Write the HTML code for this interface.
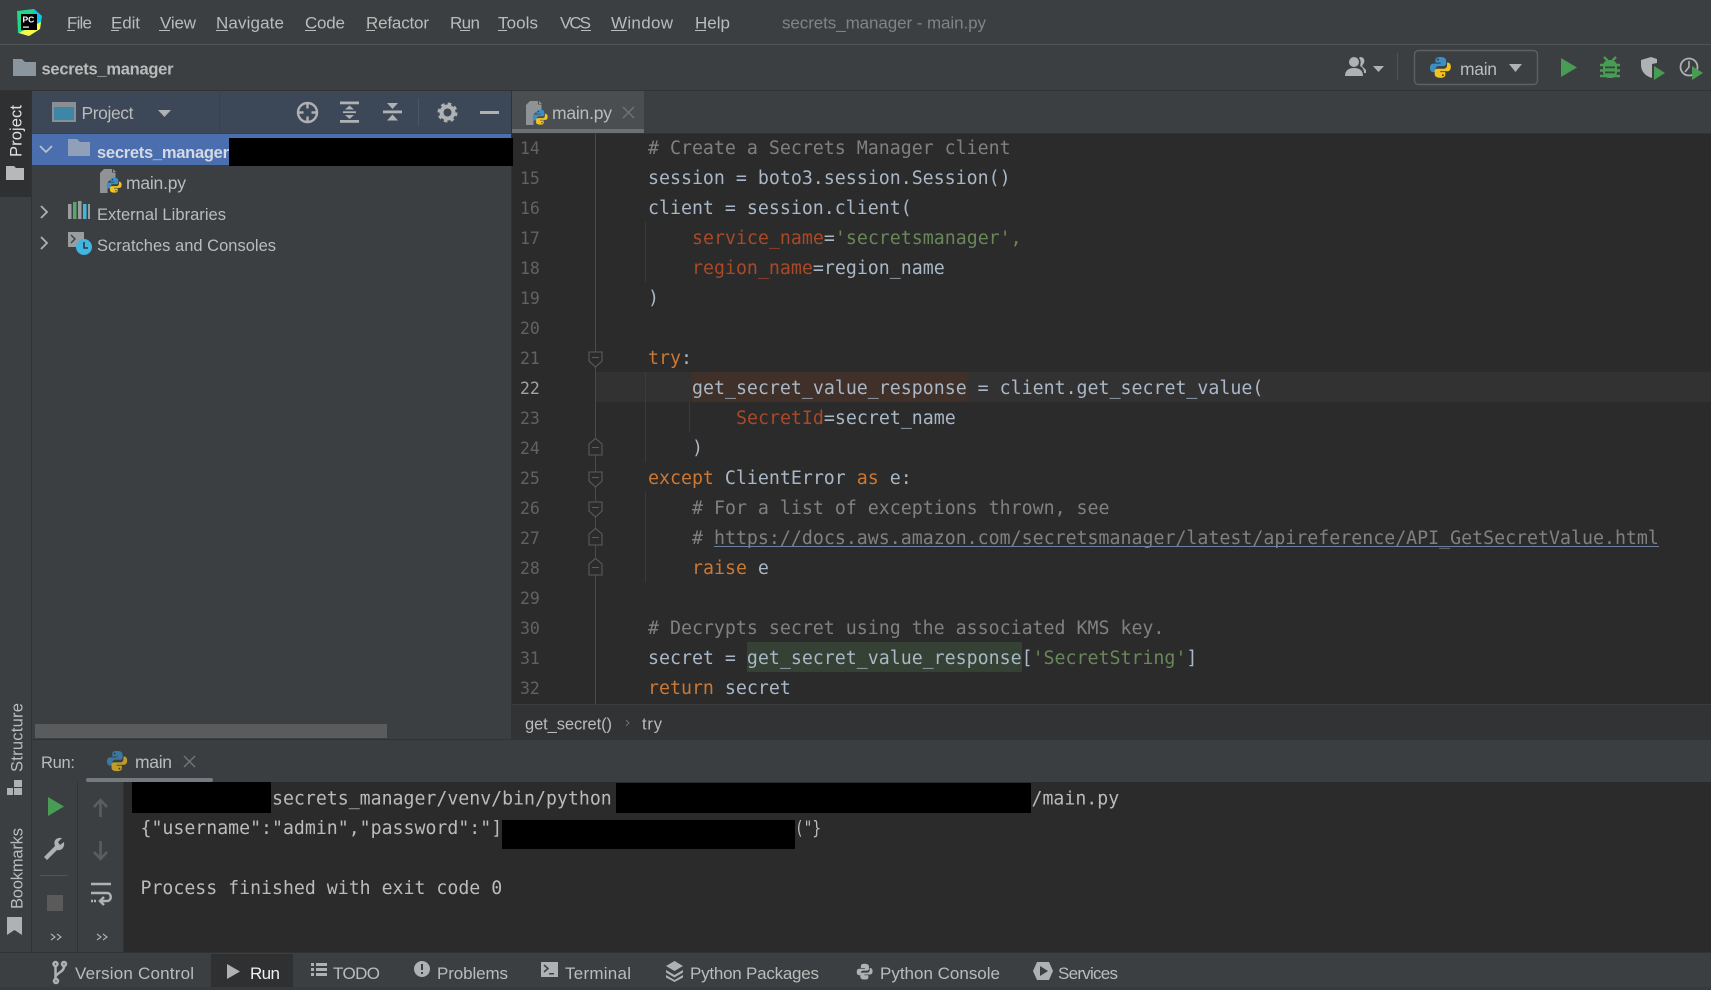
<!DOCTYPE html>
<html><head><meta charset="utf-8"><title>secrets_manager - main.py</title>
<style>
html,body{margin:0;padding:0;background:#3c3f41;width:1711px;height:990px;overflow:hidden}
svg{display:block}
text{font-family:"Liberation Sans",sans-serif;font-size:17px;fill:#bbbbbb;white-space:pre}
.c{font-family:"DejaVu Sans Mono","Liberation Mono",monospace;font-size:18.25px;fill:#a9b7c6}
.n{font-family:"DejaVu Sans Mono","Liberation Mono",monospace;font-size:16.5px;fill:#606366}
.k{fill:#cc7832}.p{fill:#aa4926}.s{fill:#6a8759}.g{fill:#808080}
.o{font-family:"DejaVu Sans Mono","Liberation Mono",monospace;font-size:18.22px;fill:#bbbbbb}
</style></head><body>
<svg width="1711" height="990" viewBox="0 0 1711 990" xmlns="http://www.w3.org/2000/svg">
<defs>
<g id="py">
<path fill="#3d8ec4" d="M12 1C7 1 6.8 3 6.8 4.6V7H12.3V8H4.4C2.3 8 1 9.8 1 12.5S2.3 17 4.4 17H6.8V14.2C6.8 12 8.3 10.6 10.2 10.6H15.4C17 10.6 18 9.5 18 8V4.6C18 2.6 16 1 12 1Z"/>
<circle cx="9.4" cy="3.8" r="1" fill="#26394a"/>
<path fill="#f2c31f" d="M12 23C17 23 17.2 21 17.2 19.4V17H11.7V16H19.6C21.7 16 23 14.2 23 11.5S21.7 7 19.6 7H19V9.8C19 12 17.7 13.4 15.8 13.4H8.6C7 13.4 6 14.5 6 16V19.4C6 21.4 8 23 12 23Z"/>
<circle cx="14.6" cy="20.2" r="1" fill="#4a3d10"/>
</g>
<g id="pyfile">
<path fill="#8f9396" d="M4 0H12V3.5H15.5V11H12C9 11 7.5 13 7.5 15V24H0V4Z M13 0L16 3H13Z"/>
<g transform="translate(6,8) scale(.68)"><use href="#py"/></g>
</g>
</defs>

<!-- base regions -->
<rect width="1711" height="990" fill="#3c3f41"/>
<rect y="44" width="1711" height="1" fill="#515455"/>
<rect y="90" width="1711" height="1" fill="#323232"/>
<rect x="0" y="91" width="31" height="106" fill="#2e3032"/>
<rect x="31" y="91" width="1" height="861" fill="#323232"/>

<!-- menu -->
<g transform="translate(15,9)">
<path d="M2 2L19 0L27 7L25 20L14 27L3 24Z" fill="#21d789"/>
<path d="M19 0L27 7L25 15L17 8Z" fill="#07c3f2"/>
<path d="M4 24L14 27L25 20L26 13L12 20Z" fill="#fcf84a"/>
<rect x="6" y="5" width="16" height="16" fill="#000"/>
<text x="7.5" y="13.5" style="font-size:8.5px;font-weight:700;fill:#fff">PC</text>
<rect x="8" y="17.5" width="6" height="1.2" fill="#fff"/>
</g>
<text x="67" y="28.5" textLength="25">File</text><rect x="67" y="30" width="8" height="1" fill="#bbb"/>
<text x="111" y="28.5" textLength="29">Edit</text><rect x="111" y="30" width="8" height="1" fill="#bbb"/>
<text x="160" y="28.5" textLength="36">View</text><rect x="159" y="30" width="11" height="1" fill="#bbb"/>
<text x="216" y="28.5" textLength="68">Navigate</text><rect x="216" y="30" width="12" height="1" fill="#bbb"/>
<text x="305" y="28.5" textLength="40">Code</text><rect x="305" y="30" width="11" height="1" fill="#bbb"/>
<text x="366" y="28.5" textLength="63">Refactor</text><rect x="366" y="30" width="9" height="1" fill="#bbb"/>
<text x="450" y="28.5" textLength="30">Run</text><rect x="460" y="30" width="10" height="1" fill="#bbb"/>
<text x="498" y="28.5" textLength="40">Tools</text><rect x="498" y="30" width="9" height="1" fill="#bbb"/>
<text x="560" y="28.5" textLength="31">VCS</text><rect x="581" y="30" width="10" height="1" fill="#bbb"/>
<text x="611" y="28.5" textLength="62">Window</text><rect x="611" y="30" width="16" height="1" fill="#bbb"/>
<text x="695" y="28.5" textLength="35">Help</text><rect x="695" y="30" width="11" height="1" fill="#bbb"/>
<text x="782" y="28.5" textLength="204" style="fill:#808486">secrets_manager - main.py</text>

<!-- nav bar -->
<path d="M13 59H22L25 62H36V76H13Z" fill="#8a959d"/>
<text x="41.5" y="74.500" textLength="132" style="font-weight:700;font-size:16.5px">secrets_manager</text>
<g fill="#afb1b3">
<circle cx="1354" cy="62" r="5"/><path d="M1345 76C1345 70 1349 68 1354 68S1363 70 1363 76Z"/>
<path d="M1360 57C1364 57 1365 60 1364 63L1362 66L1366 70V73H1364C1364 69 1362 67 1360 66C1361 63 1361 60 1359 58Z"/>
<path d="M1373 66H1384L1378.5 72Z"/>
</g>
<rect x="1397" y="53" width="1" height="27" fill="#515455"/>
<rect x="1414.5" y="50.5" width="123" height="34" rx="4" fill="#3c3f41" stroke="#5e6060" stroke-width="1.4"/>
<g transform="translate(1429,56) scale(.95)"><use href="#py"/></g>
<text x="1460" y="75" textLength="37" style="font-size:17.5px">main</text>
<path d="M1509 64H1522L1515.5 72Z" fill="#afb1b3"/>
<path d="M1561 58L1577 67.5L1561 77Z" fill="#499c54"/>
<g>
<path d="M1604 57L1607.500 60.500M1616 57L1612.500 60.500M1600 65H1620M1600 70.500H1620M1600 76H1620" stroke="#499c54" stroke-width="2.400" fill="none"/>
<rect x="1603" y="60" width="14" height="18" rx="6" fill="#499c54"/>
<rect x="1605" y="66.500" width="10" height="1.800" fill="#2f4a35"/><rect x="1605" y="71.500" width="10" height="1.800" fill="#2f4a35"/>
</g>
<path d="M1641 60L1651 57L1657 59V63L1652 64V78C1645 76 1641 71 1641 65Z" fill="#afb1b3"/>
<path d="M1654 66L1665 73L1654 80Z" fill="#499c54"/>
<circle cx="1689" cy="67" r="8.500" fill="none" stroke="#afb1b3" stroke-width="1.800"/>
<path d="M1689 61V67L1685 72" fill="none" stroke="#afb1b3" stroke-width="1.600"/>
<path d="M1692 66L1703 73L1692 80Z" fill="#499c54"/>

<!-- left strip -->
<text transform="translate(21.5,157) rotate(-90)" textLength="52" style="fill:#e0e0e0;font-size:16.500px">Project</text>
<path d="M6 166H14L16 168H24V180H6Z" fill="#b6b8ba"/>
<text transform="translate(22.500,772) rotate(-90)" textLength="69" style="font-size:16.500px">Structure</text>
<path d="M14 780H22V787H14ZM7 788H13V795H7ZM14 788H22V795H14Z" fill="#afb1b3"/>
<text transform="translate(22.500,909) rotate(-90)" textLength="81" style="font-size:16.500px">Bookmarks</text>
<path d="M7 917H22V935L14.500 930L7 935Z" fill="#afb1b3"/>

<!-- project panel -->
<rect x="32" y="91" width="479" height="42" fill="#3c4757"/>
<rect x="219" y="91" width="1" height="42" fill="#37414f"/>
<rect x="52" y="102" width="24" height="20" fill="#8a8f93"/><rect x="54" y="107" width="20" height="13" fill="#3e86a8"/>
<text x="81.500" y="119" textLength="52" style="font-size:17.500px">Project</text>
<path d="M158 110H171L164.500 117Z" fill="#afb1b3"/>
<g fill="none" stroke="#afb1b3" stroke-width="2.400">
<circle cx="307.500" cy="112.500" r="9.500"/><path d="M307.500 103V108.500M307.500 116.500V122M298 112.500H303.500M311.500 112.500H317"/>
</g>
<g fill="#afb1b3">
<rect x="340" y="101.500" width="19" height="2.800"/><rect x="340" y="120" width="19" height="2.800"/>
<path d="M345 109.500L349.500 105.500L354 109.500ZM345 115L349.500 119L354 115Z"/><rect x="343" y="111.300" width="13" height="1.800"/>
<rect x="383" y="110.500" width="19" height="2.800"/>
<path d="M387 103H398L392.500 109ZM387 120.500H398L392.500 114.500Z"/>
</g>
<rect x="418" y="98" width="1" height="28" fill="#4a5464"/>
<circle cx="447.500" cy="112.500" r="6" fill="none" stroke="#afb1b3" stroke-width="4"/>
<circle cx="447.500" cy="112.500" r="8.500" fill="none" stroke="#afb1b3" stroke-width="3" stroke-dasharray="3.500 3.170"/>
<rect x="480" y="111" width="19" height="3" fill="#afb1b3"/>

<rect x="32" y="134" width="479" height="31" fill="#4b6eaf"/>
<path d="M40 146L46 152L52 146" fill="none" stroke="#b8c0cc" stroke-width="1.800"/>
<path d="M68 139H77L80 142H90V156H68Z" fill="#8fa0b8"/>
<text x="97" y="158" textLength="132" style="font-weight:700;font-size:16.500px;fill:#d4d9e2">secrets_manager</text>
<g transform="translate(100,169)"><use href="#pyfile"/></g>
<text x="126" y="189" textLength="60" style="font-size:17.500px">main.py</text>
<path d="M41 206L47 212L41 218" fill="none" stroke="#afb1b3" stroke-width="1.800"/>
<g>
<rect x="68" y="204" width="3.500" height="15" fill="#9a9da0"/><rect x="73" y="202" width="3.500" height="17" fill="#59a869"/>
<rect x="78" y="201" width="3.500" height="18" fill="#9a9da0"/><rect x="83" y="204" width="3.500" height="15" fill="#40b6e0"/><rect x="88" y="204" width="2" height="15" fill="#9a9da0"/>
</g>
<text x="97" y="220" textLength="129" style="font-size:16.500px">External Libraries</text>
<path d="M41 237L47 243L41 249" fill="none" stroke="#afb1b3" stroke-width="1.800"/>
<path d="M68 232H84V241C80 242 78 244 77 247H68Z" fill="#9a9da0"/>
<path d="M71 235L75 239L71 243" fill="none" stroke="#3c3f41" stroke-width="1.400"/>
<circle cx="84" cy="247" r="8" fill="#40b6e0"/><path d="M84 242V248H88" fill="none" stroke="#2b3a42" stroke-width="1.600"/>
<text x="97" y="251" textLength="179" style="font-size:16.500px">Scratches and Consoles</text>
<rect x="35" y="724" width="352" height="14" fill="#5a5b5d"/>

<!-- editor -->
<rect x="511" y="91" width="1" height="648" fill="#323232"/>
<rect x="512" y="91" width="1199" height="42" fill="#3c3f41"/>
<rect x="512" y="133" width="1199" height="1" fill="#323232"/>
<rect x="512" y="91" width="132" height="38" fill="#4b4e50"/>
<rect x="512" y="129" width="132" height="4" fill="#6c7073"/>
<g transform="translate(526,101)"><use href="#pyfile"/></g>
<text x="552" y="119" textLength="60" style="font-size:17.500px">main.py</text>
<path d="M623 107L634 118M634 107L623 118" stroke="#6f7274" stroke-width="1.500"/>

<rect x="512" y="134" width="1199" height="570" fill="#2b2b2b"/>
<rect x="229" y="138" width="284" height="28" fill="#000"/>
<rect x="596" y="372" width="1115" height="30" fill="#323232"/>
<rect x="692" y="372" width="275" height="30" fill="#3f302a"/>
<rect x="747" y="642" width="275" height="30" fill="#344134"/>
<rect x="595" y="134" width="1" height="570" fill="#4a4b4c"/>
<g fill="#3a3b3c">
<rect x="645" y="222" width="1" height="60"/>
<rect x="645" y="372" width="1" height="90"/>
<rect x="689" y="402" width="1" height="30"/>
<rect x="645" y="492" width="1" height="90"/>
</g>
<g fill="#2b2b2b" stroke="#5a5c5e" stroke-width="1.100">
<path d="M589 352H602V361L595.500 367L589 361Z"/>
<path d="M589 455V444L595.500 438.500L602 444V455Z"/>
<path d="M589 472H602V481L595.500 487L589 481Z"/>
<path d="M589 502H602V511L595.500 517L589 511Z"/>
<path d="M589 545V534L595.500 528.500L602 534V545Z"/>
<path d="M589 575V564L595.500 558.500L602 564V575Z"/>
</g>
<g fill="#5a5c5e">
<rect x="592" y="357" width="7" height="1"/><rect x="592" y="447" width="7" height="1"/><rect x="592" y="477" width="7" height="1"/><rect x="592" y="507" width="7" height="1"/><rect x="592" y="537" width="7" height="1"/><rect x="592" y="567" width="7" height="1"/>
</g>

<g>
<text class="n" x="520" y="154">14</text><text class="n" x="520" y="184">15</text><text class="n" x="520" y="214">16</text><text class="n" x="520" y="244">17</text><text class="n" x="520" y="274">18</text><text class="n" x="520" y="304">19</text><text class="n" x="520" y="334">20</text><text class="n" x="520" y="364">21</text><text class="n" x="520" y="394" style="fill:#a4a3a3">22</text><text class="n" x="520" y="424">23</text><text class="n" x="520" y="454">24</text><text class="n" x="520" y="484">25</text><text class="n" x="520" y="514">26</text><text class="n" x="520" y="544">27</text><text class="n" x="520" y="574">28</text><text class="n" x="520" y="604">29</text><text class="n" x="520" y="634">30</text><text class="n" x="520" y="664">31</text><text class="n" x="520" y="694">32</text>
</g>
<text class="c" x="648" y="154"><tspan class="g"># Create a Secrets Manager client</tspan></text>
<text class="c" x="648" y="184">session = boto3.session.Session()</text>
<text class="c" x="648" y="214">client = session.client(</text>
<text class="c" x="692" y="244"><tspan class="p">service_name</tspan>=<tspan class="s">'secretsmanager',</tspan></text>
<text class="c" x="692" y="274"><tspan class="p">region_name</tspan>=region_name</text>
<text class="c" x="648" y="304">)</text>
<text class="c" x="648" y="364"><tspan class="k">try</tspan>:</text>
<text class="c" x="692" y="394">get_secret_value_response = client.get_secret_value(</text>
<text class="c" x="736" y="424"><tspan class="p">SecretId</tspan>=secret_name</text>
<text class="c" x="692" y="454">)</text>
<text class="c" x="648" y="484"><tspan class="k">except</tspan> ClientError <tspan class="k">as</tspan> e:</text>
<text class="c" x="692" y="514"><tspan class="g"># For a list of exceptions thrown, see</tspan></text>
<text class="c" x="692" y="544"><tspan class="g"># https://docs.aws.amazon.com/secretsmanager/latest/apireference/API_GetSecretValue.html</tspan></text>
<rect x="714" y="546" width="945" height="1" fill="#6a7f9f"/>
<text class="c" x="692" y="574"><tspan class="k">raise</tspan> e</text>
<text class="c" x="648" y="634"><tspan class="g"># Decrypts secret using the associated KMS key.</tspan></text>
<text class="c" x="648" y="664">secret = get_secret_value_response[<tspan class="s">'SecretString'</tspan>]</text>
<text class="c" x="648" y="694"><tspan class="k">return</tspan> secret</text>

<!-- breadcrumbs -->
<rect x="512" y="704" width="1199" height="1" fill="#3a3d3f"/>
<rect x="512" y="705" width="1199" height="34" fill="#313335"/>
<text x="525" y="729.500" textLength="87" style="font-size:16.500px">get_secret()</text>
<path d="M626 720L629 723L626 726" fill="none" stroke="#6f7274" stroke-width="1"/>
<text x="642" y="729.500" textLength="20" style="font-size:16.500px">try</text>

<!-- run panel -->
<rect x="32" y="739" width="1679" height="1" fill="#323232"/>
<rect x="32" y="740" width="1679" height="42" fill="#3a3e41"/>
<text x="41" y="768" textLength="34" style="font-size:16.500px">Run:</text>
<g transform="translate(106,750) scale(.92)" opacity=".72"><use href="#py"/></g>
<text x="135" y="768" textLength="37" style="font-size:17.500px">main</text>
<path d="M184 756L195 767M195 756L184 767" stroke="#6f7274" stroke-width="1.500"/>
<rect x="86" y="778" width="127" height="4" rx="2" fill="#747a80"/>
<rect x="124" y="782" width="1587" height="170" fill="#2b2b2b"/>
<rect x="77" y="782" width="1" height="170" fill="#323232"/>
<rect x="123" y="782" width="1" height="170" fill="#323232"/>

<path d="M48 797L64 806.500L48 816Z" fill="#499c54"/>
<path d="M44 857L55 846C53 841 56 837 62 838L58 842L60 845L64 842C65 848 61 851 57 850L47 860Z" fill="#afb1b3"/>
<rect x="40" y="875" width="28" height="1" fill="#515455"/>
<rect x="47" y="895" width="16" height="16" fill="#5a5a5a"/>
<path d="M51 934L55 937L51 940M57 934L61 937L57 940M97 934L101 937L97 940M103 934L107 937L103 940" fill="none" stroke="#afb1b3" stroke-width="1.100"/>
<path d="M100.500 817V801M94 807L100.500 800L107 807M100.500 841V858M94 852L100.500 859L107 852" fill="none" stroke="#5b5e60" stroke-width="2.500"/>
<g fill="none" stroke="#afb1b3" stroke-width="2.500">
<path d="M91 884H111M91 893H107C112 893 112 901 107 901H101"/>
<path d="M104 897L100 901L104 905"/>
<path d="M91 901H96" stroke-dasharray="2 1"/>
</g>

<rect x="132" y="782" width="139" height="31" fill="#000"/>
<text class="o" x="272" y="804.500">secrets_manager/venv/bin/python</text>
<rect x="616" y="783" width="415" height="30" fill="#000"/>
<text class="o" x="1031.500" y="804.500">/main.py</text>
<text class="o" x="140.500" y="834">{"username":"admin","password":"]</text>
<rect x="502" y="820" width="293" height="29" fill="#000"/>
<text class="o" x="795" y="834" textLength="26" lengthAdjust="spacingAndGlyphs">("}</text>
<text class="o" x="140.500" y="894">Process finished with exit code 0</text>

<!-- bottom bar -->
<rect y="952" width="1711" height="1" fill="#323232"/>
<rect y="953" width="1711" height="37" fill="#3c3f41"/>
<rect y="987" width="1711" height="3" fill="#383b3d"/>
<rect x="211" y="954" width="82" height="33" fill="#2e3032"/>
<g fill="none" stroke="#afb1b3" stroke-width="2.500">
<circle cx="55.500" cy="964" r="2"/><circle cx="64" cy="964" r="2"/><circle cx="56" cy="981" r="2"/>
<path d="M55.500 966V979M64 966C64 972 58 972 56 976"/>
</g>
<text x="75" y="979" textLength="119" style="font-size:17px">Version Control</text>
<path d="M227 964L240 971.500L227 979Z" fill="#afb1b3"/>
<text x="250" y="979" textLength="30" style="font-size:17px;fill:#f0f0f0">Run</text>
<g fill="#afb1b3">
<rect x="311" y="963" width="3" height="3"/><rect x="316" y="963" width="11" height="3"/>
<rect x="311" y="968" width="3" height="3"/><rect x="316" y="968" width="11" height="3"/>
<rect x="311" y="973" width="3" height="3"/><rect x="316" y="973" width="11" height="3"/>
</g>
<text x="333" y="979" textLength="47" style="font-size:17px">TODO</text>
<circle cx="422" cy="969" r="8" fill="#afb1b3"/><rect x="421" y="964" width="2" height="6" fill="#3c3f41"/><rect x="421" y="972" width="2" height="2" fill="#3c3f41"/>
<text x="437" y="979" textLength="71" style="font-size:17px">Problems</text>
<rect x="541" y="962" width="17" height="15" fill="#afb1b3"/>
<path d="M544 965L548 968.500L544 972" fill="none" stroke="#3c3f41" stroke-width="1.500"/><rect x="549" y="973" width="5" height="1.500" fill="#3c3f41"/>
<text x="565" y="979" textLength="66" style="font-size:17px">Terminal</text>
<g fill="#afb1b3">
<path d="M674.500 961L683 966L674.500 971L666 966Z"/>
<path d="M666 970L674.500 975L683 970V972.500L674.500 977.500L666 972.500Z"/>
<path d="M666 975L674.500 980L683 975V977.500L674.500 982L666 977.500Z"/>
</g>
<text x="690" y="979" textLength="129" style="font-size:17px">Python Packages</text>
<g transform="translate(856,963) scale(.72)"><path fill="#afb1b3" d="M12 1C7 1 6.800 3 6.800 4.600V7H12.300V8H4.400C2.300 8 1 9.800 1 12.500S2.300 17 4.400 17H6.800V14.200C6.800 12 8.300 10.600 10.200 10.600H15.400C17 10.600 18 9.500 18 8V4.600C18 2.600 16 1 12 1Z"/><path fill="#afb1b3" d="M12 23C17 23 17.200 21 17.200 19.400V17H11.700V16H19.600C21.700 16 23 14.200 23 11.500S21.700 7 19.600 7H19V9.800C19 12 17.700 13.400 15.800 13.400H8.600C7 13.400 6 14.500 6 16V19.400C6 21.400 8 23 12 23Z"/></g>
<text x="880" y="979" textLength="120" style="font-size:17px">Python Console</text>
<path d="M1037 962H1049L1053 971L1049 980H1037L1033 971Z" fill="#afb1b3"/>
<path d="M1040 966L1048 971L1040 976Z" fill="#3c3f41"/>
<text x="1058" y="979" textLength="60" style="font-size:17px">Services</text>
</svg>
</body></html>
